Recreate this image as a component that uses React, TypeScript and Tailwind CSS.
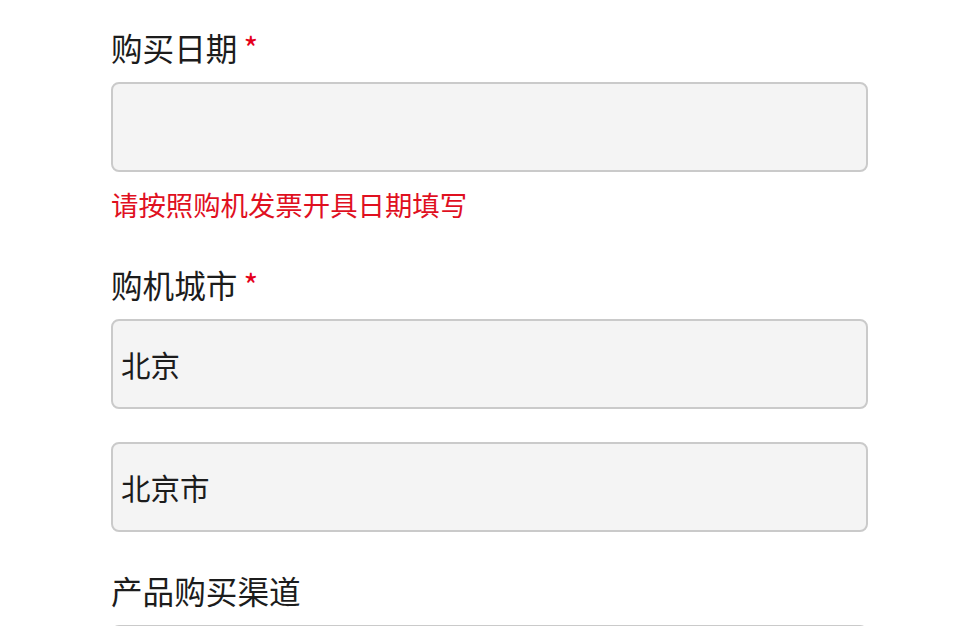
import React from 'react';

const font = { fontFamily: '"Noto Sans CJK SC", "Noto Sans", sans-serif' };

const Label = ({ text, required }: { text: string; required?: boolean }) => (
    <div className="h-[40px] leading-[40px] text-[31.6px] text-[#1c1c1c] mb-[15px]">
        {text}
        {required && <span className="ml-[6px] text-[#e5001b]">*</span>}
    </div>
);

const Field = ({ value }: { value?: string }) => (
    <div className="h-[90px] w-full rounded-[8px] border-2 border-[#cacaca] bg-[#f4f4f4] flex items-center px-[8px] text-[29.5px] text-[#1c1c1c]">
        {value}
    </div>
);

export default function App() {
    return (
        <div className="min-h-screen bg-white px-[111px] pt-[27px]" style={font}>
            <Label text="购买日期" required />
            <Field />
            <div className="mt-[16px] h-[32px] leading-[32px] text-[27.4px] text-[#e0101f]">请按照购机发票开具日期填写</div>

            <div className="mt-[44px]">
                <Label text="购机城市" required />
                <Field value="北京" />
                <div className="mt-[33px]">
                    <Field value="北京市" />
                </div>
            </div>

            <div className="mt-[38px]">
                <Label text="产品购买渠道" />
                <Field />
            </div>
        </div>
    );
}
